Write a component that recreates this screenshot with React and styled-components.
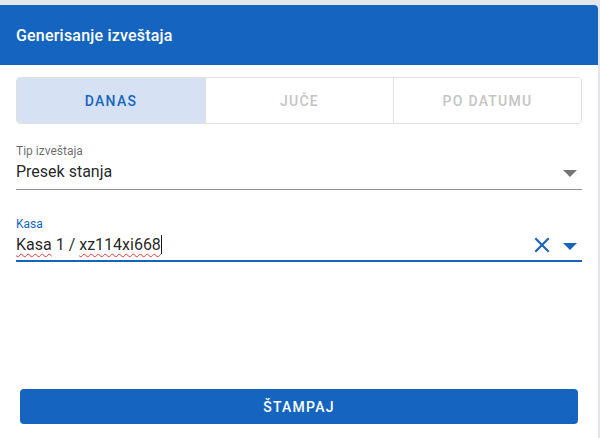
import styled, { createGlobalStyle } from "styled-components";

const GlobalStyle = createGlobalStyle`
  html, body {
    margin: 0;
    padding: 0;
    background: #e4e6eb;
    font-family: Roboto, "Liberation Sans", Arial, sans-serif;
  }
`;

const Card = styled.div`
  margin: 5px 2px 0 0;
  min-height: calc(100vh - 5px);
  background: #ffffff;
  border-radius: 0 4px 0 0;
  display: flex;
  flex-direction: column;
  box-sizing: border-box;
`;

const Header = styled.div`
  height: 60px;
  background: #1565c0;
  border-radius: 0 4px 0 0;
  display: flex;
  align-items: center;
  padding: 0 16px;
  color: #ffffff;
  font-size: 16px;
  font-weight: 500;
  letter-spacing: 0.2px;
`;

const Body = styled.div`
  flex: 1;
  display: flex;
  flex-direction: column;
  padding: 12px 16px 14px 16px;
`;

const Tabs = styled.div`
  display: grid;
  grid-template-columns: repeat(3, 1fr);
  height: 47px;
  border: 1px solid #e0e0e0;
  border-radius: 4px;
  overflow: hidden;
  box-sizing: border-box;
`;

const Tab = styled.div`
  display: flex;
  align-items: center;
  justify-content: center;
  font-size: 14px;
  font-weight: 500;
  letter-spacing: 1.25px;
  color: ${(p) => (p.$active ? "#1565c0" : "#c4c4c4")};
  background: ${(p) => (p.$active ? "#d6e2f3" : "#ffffff")};
  & + & {
    border-left: 1px solid #e0e0e0;
  }
`;

const Field = styled.div`
  margin-top: ${(p) => p.$top}px;
`;

const Label = styled.div`
  font-size: 12px;
  line-height: 16px;
  margin-bottom: 1px;
  color: ${(p) => (p.$focused ? "#1565c0" : "rgba(0,0,0,0.6)")};
`;

const ValueRow = styled.div`
  display: flex;
  align-items: center;
  height: 24px;
  padding: 0 5px ${(p) => (p.$focused ? 3 : 5)}px 0;
  border-bottom: ${(p) => (p.$focused ? "2px solid #1565c0" : "1px solid #949494")};
`;

const Value = styled.div`
  flex: 1;
  font-size: 16px;
  line-height: 24px;
  color: rgba(0, 0, 0, 0.87);
  white-space: pre;
`;

const Misspelled = styled.span`
  text-decoration: underline wavy #e53935;
  text-decoration-thickness: 1px;
  text-underline-offset: 3px;
`;

const Caret = styled.span`
  display: inline-block;
  width: 1px;
  height: 19px;
  background: #1a1a1a;
  vertical-align: -4px;
`;

const ClearIcon = styled.svg`
  width: 16px;
  height: 16px;
  margin-right: 13px;
  fill: #1565c0;
`;

const Arrow = styled.svg`
  width: 14px;
  height: 7px;
  margin-top: 3px;
  fill: ${(p) => p.$color};
`;

const PrintButton = styled.button`
  margin: auto 4px 0 4px;
  height: 35px;
  border: none;
  border-radius: 4px;
  background: #1565c0;
  color: #ffffff;
  font-family: Roboto, "Liberation Sans", Arial, sans-serif;
  font-size: 14px;
  font-weight: 500;
  letter-spacing: 1.25px;
  cursor: pointer;
`;

const DropArrow = ({ color }) => (
  <Arrow $color={color} viewBox="0 0 14 7">
    <path d="M0 0h14L7 7z" />
  </Arrow>
);

const App = () => {
  return (
    <>
      <GlobalStyle />
      <Card>
        <Header>Generisanje izveštaja</Header>
        <Body>
          <Tabs>
            <Tab $active>DANAS</Tab>
            <Tab>JUČE</Tab>
            <Tab>PO DATUMU</Tab>
          </Tabs>

          <Field $top={19}>
            <Label>Tip izveštaja</Label>
            <ValueRow>
              <Value>Presek stanja</Value>
              <DropArrow color="#757575" />
            </ValueRow>
          </Field>

          <Field $top={26}>
            <Label $focused>Kasa</Label>
            <ValueRow $focused>
              <Value>
                <Misspelled>Kasa</Misspelled> 1 / <Misspelled>xz114xi668</Misspelled>
                <Caret />
              </Value>
              <ClearIcon viewBox="4.5 4.5 15 15">
                <path d="M19 6.41L17.59 5 12 10.59 6.41 5 5 6.41 10.59 12 5 17.59 6.41 19 12 13.41 17.59 19 19 17.59 13.41 12z" />
              </ClearIcon>
              <DropArrow color="#1565c0" />
            </ValueRow>
          </Field>

          <PrintButton>ŠTAMPAJ</PrintButton>
        </Body>
      </Card>
    </>
  );
};

export default App;
